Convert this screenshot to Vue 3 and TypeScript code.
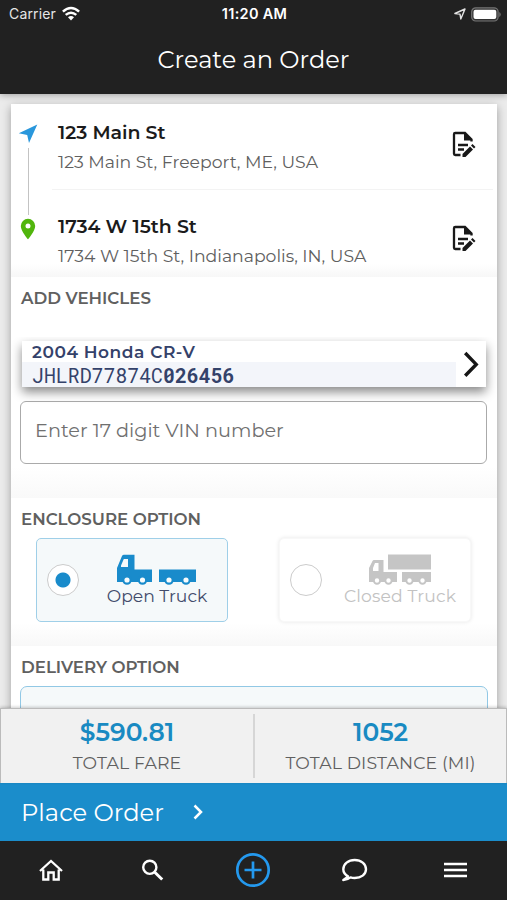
<script setup lang="ts">
interface Stop { title: string; address: string }
interface Total { value: string; label: string; key: string }

const stops: Stop[] = [
  { title: '123 Main St', address: '123 Main St, Freeport, ME, USA' },
  { title: '1734 W 15th St', address: '1734 W 15th St, Indianapolis, IN, USA' },
]
const totals: Total[] = [
  { value: '$590.81', label: 'TOTAL FARE', key: 'fare' },
  { value: '1052', label: 'TOTAL DISTANCE (MI)', key: 'distance' },
]
</script>

<template>
  <div class="screen">
    <header class="top">
      <div class="status">
        <div class="carrier">
          <span class="carrier-name">Carrier</span>
          <svg width="18" height="14" viewBox="0 0 18 14" fill="none" stroke="#fff" stroke-width="2.5">
            <path d="M.9 4.700Q9-2.700 17.1 4.700" />
            <path d="M3.7 7.900Q9 3.500 14.300 7.900" />
            <path d="M6 10.2Q9 7.6 12 10.2L9 13.4Z" fill="#fff" stroke="none" />
          </svg>
        </div>
        <span class="clock">11:20 AM</span>
        <div class="power">
          <svg width="12" height="12" viewBox="0 0 12 12" fill="none" stroke="#e4e4e4" stroke-width="1.4" stroke-linejoin="round">
            <path d="M.9 5.5 11 1 6.8 11 6 6.1Z" />
          </svg>
          <svg width="30" height="15" viewBox="0 0 30 15">
            <rect x=".7" y=".8" width="26.4" height="13.2" rx="4" fill="#333" stroke="#747474" stroke-width="1.2" />
            <rect x="2.5" y="2.7" width="22.8" height="9.4" rx="2" fill="#fff" />
            <path d="M28.3 5v5q1.4-.6 1.4-2.5T28.3 5Z" fill="#747474" />
          </svg>
        </div>
      </div>
      <h1 class="title">Create an Order</h1>
    </header>

    <main class="body">
      <div class="sheet">
        <section class="route">
          <div class="track">
            <svg class="nav-arrow" width="20" height="20" viewBox="0 0 20 20"><path d="M.8 9.2 19.3.6 11 19 9.2 11Z" fill="#2997dc" /></svg>
            <span class="line"></span>
            <svg class="pin" width="16" height="22" viewBox="0 0 16 22"><path fill-rule="evenodd" d="M8 .8A7.2 7.2 0 0 0 .8 8C.8 13 8 21.3 8 21.3S15.200 13 15.200 8A7.200 7.200 0 0 0 8 .8ZM8 5.500a2.500 2.500 0 1 1 0 5 2.500 2.500 0 0 1 0-5Z" fill="#51b50d" /></svg>
          </div>
          <div class="stops">
            <div v-for="stop in stops" :key="stop.title" class="stop">
              <div class="stop-text">
                <strong class="stop-title">{{ stop.title }}</strong>
                <span class="stop-address">{{ stop.address }}</span>
              </div>
              <svg class="edit" width="24" height="27" viewBox="0 0 24 27" fill="none" stroke="#191919" stroke-width="2.300">
                <path d="M8.500 24H3.300Q2 24 2 22.700V3.300Q2 2 3.300 2H13L19.500 8.500V10.500" />
                <path d="M12 1.500V9.500H20.500Z" fill="#191919" stroke="none" />
                <path d="M6 14h10M6 18.500h6" />
                <path d="M10.500 26v-3l7.500-7.500 3 3L13.500 26Z" fill="#191919" stroke="none" />
                <path d="m19 14.500 1.500-1.500 3 3-1.500 1.500Z" fill="#191919" stroke="none" />
              </svg>
            </div>
          </div>
        </section>

        <section class="vehicles">
          <h2 class="heading">ADD VEHICLES</h2>
          <div class="vehicle">
            <div class="vehicle-info">
              <div class="model">2004 Honda CR-V</div>
              <div class="vin">JHLRD77874C<b>026456</b></div>
            </div>
            <svg width="30" height="46" viewBox="0 0 30 46" fill="none" stroke="#161616" stroke-width="3.400"><path d="M9.200 12 20.200 23.400 9.200 34.700" /></svg>
          </div>
          <div class="vin-input">Enter 17 digit VIN number</div>
        </section>

        <section class="enclosure">
          <h2 class="heading">ENCLOSURE OPTION</h2>
          <div class="options">
            <div class="option selected">
              <span class="radio"></span>
              <div class="option-body">
                <svg width="80" height="31" viewBox="0 0 80 31" fill="#198bcb">
                  <path fill-rule="evenodd" d="M0 28V14L5 2Q5.600.800 7 .800H17.500V15.500H35V28ZM6.800 5 4 11.500V13H11V5Z" />
                  <path d="M42 15.500H79V28H42Z" />
                  <g stroke="#198bcb" stroke-width="2.200" fill="#f7fbfc">
                    <circle cx="10" cy="26" r="3.700" /><circle cx="25.500" cy="26" r="3.700" />
                    <circle cx="52" cy="26" r="3.700" /><circle cx="69" cy="26" r="3.700" />
                  </g>
                </svg>
                <span class="option-label">Open Truck</span>
              </div>
            </div>
            <div class="option">
              <span class="radio"></span>
              <div class="option-body closed">
                <svg width="63" height="31" viewBox="0 0 63 31" fill="#c5c5c5">
                  <path fill-rule="evenodd" d="M0 28V14L3.500 7Q4 6 5 6H14.500V18H28V28ZM6 9 4 14V17H9.500V9Z" />
                  <path d="M19 .500H62V15.500H19ZM33 18H62V28H33Z" />
                  <g stroke="#c5c5c5" stroke-width="2" fill="#fff">
                    <circle cx="8" cy="26.500" r="3.200" /><circle cx="19.500" cy="26.500" r="3.200" />
                    <circle cx="40.500" cy="26.500" r="3.200" /><circle cx="53.500" cy="26.500" r="3.200" />
                  </g>
                </svg>
                <span class="option-label label-closed">Closed Truck</span>
              </div>
            </div>
          </div>
        </section>

        <section class="delivery">
          <h2 class="heading">DELIVERY OPTION</h2>
          <div class="delivery-box"></div>
        </section>
      </div>
    </main>

    <section class="totals">
      <div v-for="total in totals" :key="total.key" class="total">
        <strong class="amount">{{ total.value }}</strong>
        <span class="amount-label">{{ total.label }}</span>
      </div>
    </section>

    <button class="place">
      <span>Place Order</span>
      <svg width="10" height="16" viewBox="0 0 10 16" fill="none" stroke="#fff" stroke-width="2.500"><path d="m1.500 1.500 6.500 6.500-6.500 6.500" /></svg>
    </button>

    <nav class="tabs">
      <svg width="24" height="22" viewBox="0 0 24 22" fill="none" stroke="#fff" stroke-width="2.300"><path d="M1 12 12 2 23 12M4.300 10.500V20.500H9.300V13.500H14.700V20.500H19.700V10.500" /></svg>
      <svg width="23" height="22" viewBox="0 0 23 22" fill="none" stroke="#fff"><circle cx="8.800" cy="8.300" r="6.600" stroke-width="2.400" /><path d="m13.500 13 7.700 7.500" stroke-width="3" /></svg>
      <svg width="36" height="36" viewBox="0 0 36 36" fill="none" stroke="#2499ee" stroke-width="2.700"><circle cx="18" cy="18" r="15.700" /><path d="M18 9.500v17M9.500 18h17" /></svg>
      <svg width="27" height="24" viewBox="0 0 27 24" fill="none" stroke="#fff" stroke-width="2.400"><path d="M7 18.200C3.800 16.600 2.300 14 2.300 11.300 2.300 6 7.300 2 13.700 2S25 6 25 11.300 20 20 13.700 20C12 20 10.700 19.800 9.500 19.400 7.500 21 5 22 2.300 22 4.400 20.700 6 19.700 7 18.200Z" stroke-linejoin="round" /></svg>
      <svg width="23" height="16" viewBox="0 0 23 16" stroke="#fff" stroke-width="2.600"><path d="M0 2h23M0 8h23M0 14h23" /></svg>
    </nav>
  </div>
</template>

<style>
body { background: #e9e9e9; }
</style>

<style scoped>
* { box-sizing: border-box; }
svg { display: block; flex: none; overflow: visible; }
.screen {
  width: 507px; height: 900px; display: flex; flex-direction: column; overflow: hidden;
  font-family: Montserrat, Inter, sans-serif; color: #1b1b1b; white-space: nowrap;
}
.top { height: 94px; flex: none; background: #212121; color: #fff; box-shadow: 0 1px 7px #0005; z-index: 1; }
.status { height: 28px; display: grid; grid-template-columns: 1fr auto 1fr; align-items: center; font: 500 14px/28px Inter, sans-serif; padding: 0 7px 0 9px; }
.carrier { display: flex; align-items: center; gap: 6px; }
.carrier-name { font-weight: 400; color: #e6e6e6; letter-spacing: .15px; }
.clock { font-size: 14.500px; font-weight: 600; letter-spacing: .3px; }
.power { display: flex; gap: 5px; justify-content: flex-end; align-items: center; margin-right: -1px; }
.title { margin: 14px 0 0; font-size: 24.100px; line-height: 36px; font-weight: 400; text-align: center; }
.body { flex: 1; min-height: 0; padding: 10px 10px 0 11px; background: #ebebeb; overflow: hidden; }
.sheet { height: 720px; background: #fff; box-shadow: 0 3px 9px #0005; }

.route { height: 173px; display: flex; background: linear-gradient(#fff 160px, #f7f7f7); }
.track { width: 41px; padding-top: 20px; display: flex; flex-direction: column; align-items: center; padding-right: 7px; }
.line { width: 1px; height: 67px; background: #c3c3c3; margin: 4px 0 3px; }
.stops { flex: 1; padding-right: 4px; }
.stop { height: 94px; display: flex; justify-content: space-between; padding: 15px 17px 0 6px; }
.stop:first-child { height: 86px; border-bottom: 1px solid #f3f3f3; }
.stop:last-child { padding-top: 23px; }
.stop-text { display: flex; flex-direction: column; }
.stop-title { font-size: 19px; line-height: 27px; font-weight: 600; letter-spacing: -.05px; }
.stop-address { font-size: 17.250px; line-height: 24px; margin-top: 4px; color: #606060; }
.edit { margin-top: 12px; }

.heading { margin: 0; font-size: 16.650px; line-height: 22px; font-weight: 600; color: #606060; }
.vehicles { height: 221px; padding: 10px 10px 0; background: linear-gradient(#fff 190px, #f9f9f9); }
.vehicle { height: 46px; margin: 32px 1px 0; display: flex; background: #fff; box-shadow: 0 5px 10px #0007; clip-path: inset(-4px -12px -24px -12px); }
.vehicle-info { flex: 1; color: #34426a; }
.model { padding-left: 10px; height: 21px; line-height: 22px; font-size: 17px; font-weight: 600; letter-spacing: .55px; }
.vin { height: 25px; padding-left: 10px; background: linear-gradient(90deg, #f3f5fa 434px, #fff 434px); font: 19.850px/26px "Roboto Mono", "DejaVu Sans Mono", monospace; }
.vin-input { height: 63px; margin: 14px 0 0 -1px; border: 1px solid #aaa; border-radius: 6px; padding-left: 14px; line-height: 56px; font-size: 19.250px; color: #707070; }

.enclosure { height: 148px; padding: 10px 0 0 10px; background: linear-gradient(#fff 125px, #f8f8f8); }
.options { display: flex; gap: 51px; padding: 8px 0 0 15px; }
.option { width: 192px; height: 84px; display: flex; border-radius: 5px; background: #fff; border: 1px solid #f8f8f8; box-shadow: 0 0 4px #0000001a; }
.option.selected { background: #f5f9fa; border-color: #9fcfe8; box-shadow: none; }
.radio { width: 32px; height: 32px; flex: none; margin: 25px 0 0 10px; border: 1px solid #ccc; border-radius: 50%; background: #fff; }
.selected .radio { background: radial-gradient(circle, #198bcb 7px, #fff 8px); }
.option-body { flex: 1; padding-top: 15px; display: flex; flex-direction: column; align-items: center; padding-left: 8px; }
.option-label { margin-top: -1px; font-size: 17.200px; line-height: 24px; color: #424b6b; }
.option-body.closed { padding-left: 8px; }
.option-label.label-closed { color: #c2c2c2; letter-spacing: .15px; }

.delivery { padding: 10px 9px 0; }
.delivery .heading { padding-left: 1px; }
.delivery-box { height: 60px; margin-top: 8px; border: 1px solid #91c8e5; border-radius: 7px; background: #f5f9fa; }

.totals { position: relative; height: 75px; flex: none; display: grid; grid-template-columns: 254px 1fr; background: #f1f1f1; border: 1px solid #bbb; border-bottom: 0; box-shadow: 0 -1px 3px #0003; }
.total { margin: 5px 0; display: flex; flex-direction: column; align-items: center; }
.total:first-child { border-right: 2px solid #d6d6d6; }
.amount { font-size: 24.900px; line-height: 36px; font-weight: 600; color: #198ac2; }
.amount-label { font-size: 17.300px; line-height: 22px; margin-top: 2px; color: #606060; letter-spacing: .13px; }
.place { height: 58px; flex: none; border: 0; padding: 0 21px; display: flex; align-items: center; gap: 29px; background: #1b8dcb; color: #fff; font: inherit; font-size: 24.200px; }
.tabs { height: 59px; flex: none; display: grid; grid-template-columns: repeat(5, 101.200px); align-items: center; justify-items: center; background: #212121; padding: 0 0 2px .5px; }
</style>
